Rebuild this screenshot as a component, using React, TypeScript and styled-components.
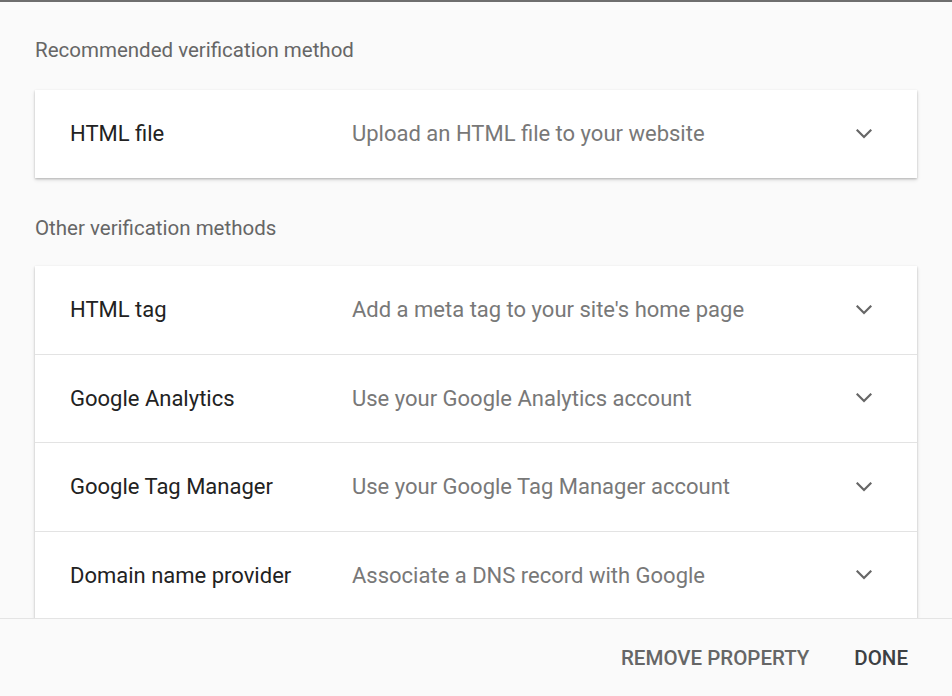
import React from 'react';

import styled, { createGlobalStyle } from 'styled-components';

interface Method {
    name: string;
    description: string;
}

const recommended: Method = { name: 'HTML file', description: 'Upload an HTML file to your website' };

const otherMethods: Method[] = [
    { name: 'HTML tag', description: "Add a meta tag to your site's home page" },
    { name: 'Google Analytics', description: 'Use your Google Analytics account' },
    { name: 'Google Tag Manager', description: 'Use your Google Tag Manager account' },
    { name: 'Domain name provider', description: 'Associate a DNS record with Google' },
];

const Chevron = () => (
    <svg width="16" height="10" viewBox="0 0 16 10" fill="none">
        <path d="M1.5 1.5L8 8l6.5-6.5" stroke="#666" strokeWidth="2.2" strokeLinecap="square" />
    </svg>
);

const MethodRow = ({ name, description }: Method) => (
    <Row>
        <Name>{name}</Name>
        <Description>{description}</Description>
        <Chevron />
    </Row>
);

const App = () => {
    return (
        <>
            <GlobalStyle />
            <Dialog>
                <Content>
                    <SectionLabel>Recommended verification method</SectionLabel>
                    <Card $top={28}>
                        <MethodRow {...recommended} />
                    </Card>
                    <SectionLabel $top={38.5}>Other verification methods</SectionLabel>
                    <Card $top={26}>
                        {otherMethods.map((method) => (
                            <MethodRow key={method.name} {...method} />
                        ))}
                    </Card>
                </Content>
                <Footer>
                    <TextButton>REMOVE PROPERTY</TextButton>
                    <TextButton $primary>DONE</TextButton>
                </Footer>
            </Dialog>
        </>
    );
};

const GlobalStyle = createGlobalStyle`
    body {
        margin: 0;
        background: #fafafa;
        font-family: Roboto, "Liberation Sans", sans-serif;
    }
`;

const Dialog = styled.div`
    height: 696px;
    box-sizing: border-box;
    display: flex;
    flex-direction: column;
    border-top: 2px solid #6e6e6e;
    background: #fafafa;
`;

const Content = styled.div`
    flex: 1;
    min-height: 0;
    overflow: hidden;
    padding: 0 35px;
`;

const SectionLabel = styled.div<{ $top?: number }>`
    margin-top: ${({ $top }) => $top ?? 36}px;
    font-size: 20.5px;
    line-height: 24px;
    color: #666;
`;

const Card = styled.div<{ $top: number }>`
    margin-top: ${({ $top }) => $top}px;
    background: #fff;
    box-shadow: 0 1px 2px rgba(0, 0, 0, 0.2), 0 2px 4px rgba(0, 0, 0, 0.12);
`;

const Row = styled.div`
    height: 87.5px;
    display: grid;
    grid-template-columns: 282px 1fr auto;
    align-items: center;
    padding: 0 45px 0 35px;
    border-bottom: 1px solid #e3e3e3;

    &:last-child {
        border-bottom: none;
    }
`;

const Name = styled.div`
    font-size: 22px;
    color: #222;
`;

const Description = styled.div`
    font-size: 22px;
    color: #787878;
`;

const Footer = styled.div`
    height: 77px;
    flex-shrink: 0;
    display: flex;
    align-items: center;
    justify-content: flex-end;
    gap: 45px;
    padding-right: 44px;
    border-top: 1px solid #e4e4e4;
    background: #fafafa;
`;

const TextButton = styled.button<{ $primary?: boolean }>`
    border: none;
    background: none;
    padding: 0;
    font-family: Roboto, "Liberation Sans", sans-serif;
    font-size: 20.5px;
    font-weight: 500;
    color: ${({ $primary }) => ($primary ? '#3c4043' : '#666')};
`;

export default App;
